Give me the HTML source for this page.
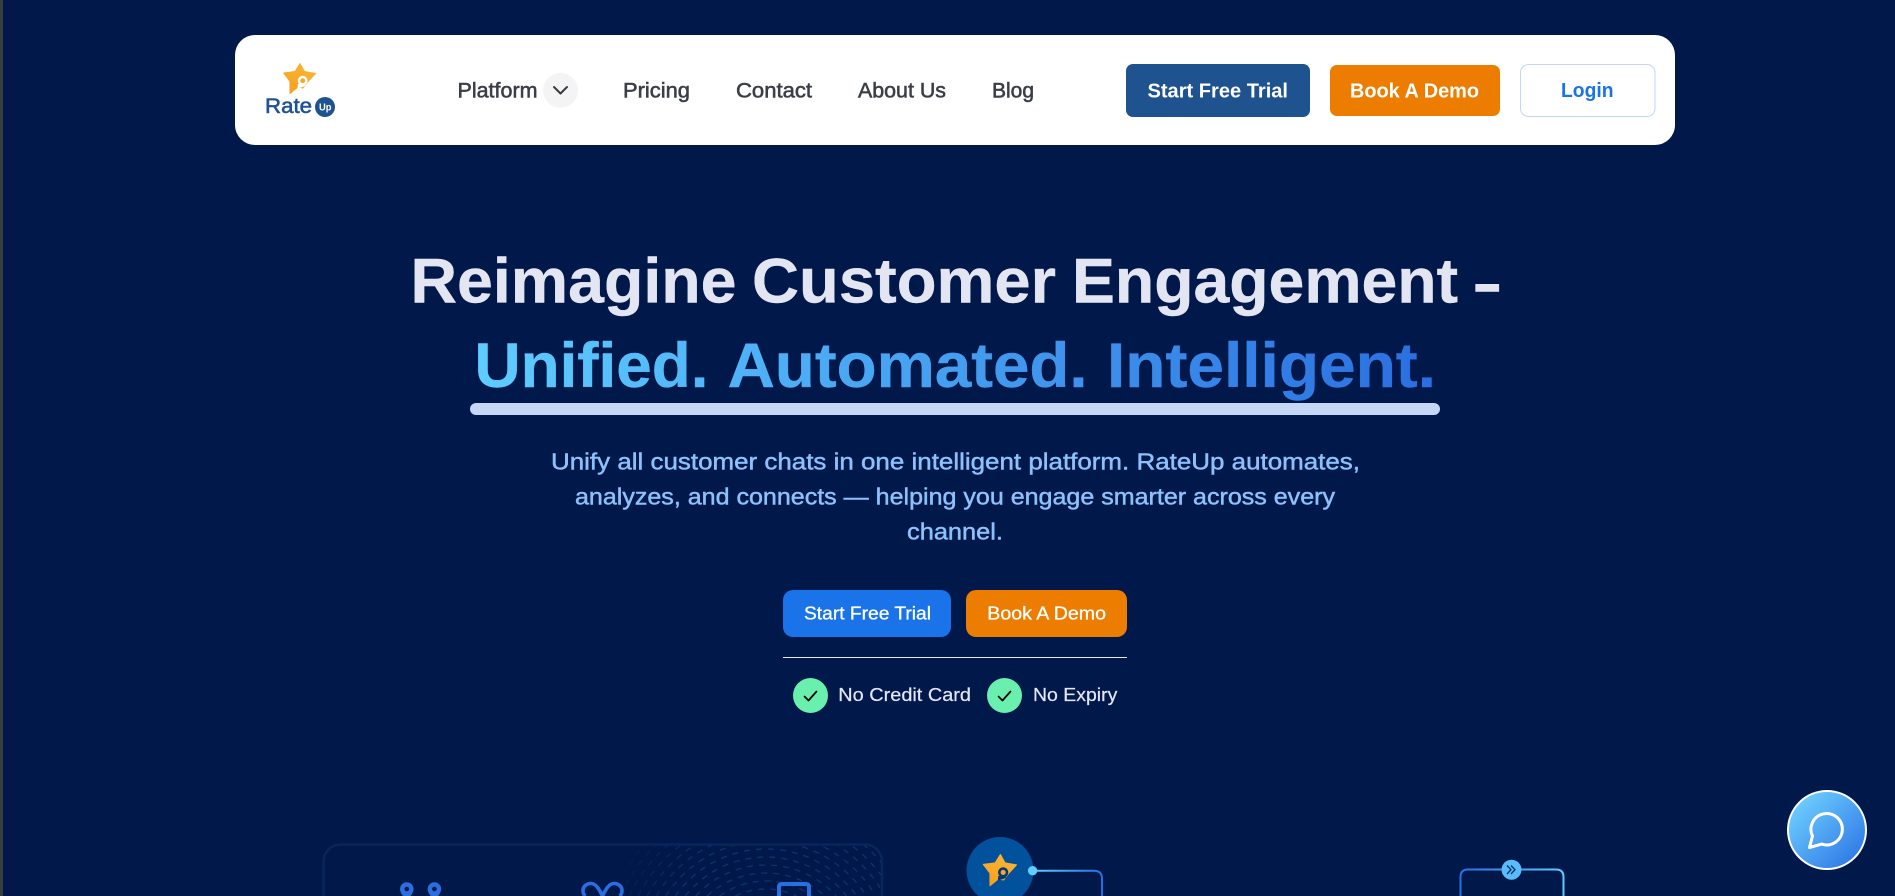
<!DOCTYPE html>
<html lang="en">
<head>
<meta charset="utf-8">
<title>RateUp</title>
<style>
html,body{margin:0;padding:0;width:1895px;height:896px;overflow:hidden;background:#00184a}
svg{position:absolute;left:0;top:0;display:block}
text{font-family:"Liberation Sans",Arial,sans-serif}
.nav{font-size:21px;font-weight:400;fill:#3a3e46;stroke:#3a3e46;stroke-width:.55}
.btn{font-size:20px;font-weight:700;fill:#fff}
.h{font-size:63px;font-weight:700}
.w{fill:#e3e6f2;stroke:#e3e6f2;stroke-width:.4}
.g{fill:url(#hg);stroke:url(#hg);stroke-width:.4}
.p{font-size:23px;fill:#8cc1fb;stroke:#8cc1fb;stroke-width:.45}
.cta{font-size:18px;fill:#fff;stroke:#fff;stroke-width:.3}
.chk{font-size:18px;fill:#e3e6f5;stroke:#e3e6f5;stroke-width:.2}
</style>
</head>
<body>
<svg width="1895" height="896" viewBox="0 0 1895 896" xmlns="http://www.w3.org/2000/svg">
<defs>
<linearGradient id="hg" gradientUnits="userSpaceOnUse" x1="470" y1="0" x2="1440" y2="0"><stop offset="0" stop-color="#5fcdff"/><stop offset="1" stop-color="#2a6ee0"/></linearGradient>
<linearGradient id="sg" x1="0.8" y1="0" x2="0.2" y2="1"><stop offset="0" stop-color="#fbb536"/><stop offset="1" stop-color="#f8a01e"/></linearGradient>
<linearGradient id="cg" x1="0.1" y1="0.1" x2="0.9" y2="0.9"><stop offset="0" stop-color="#6fd0ff"/><stop offset="1" stop-color="#2e78e6"/></linearGradient>
<linearGradient id="l1" gradientUnits="userSpaceOnUse" x1="1033" y1="0" x2="1102" y2="0"><stop offset="0" stop-color="#5fcdff"/><stop offset="1" stop-color="#2a6ee0"/></linearGradient>
<linearGradient id="l2" gradientUnits="userSpaceOnUse" x1="1460" y1="0" x2="1564" y2="0"><stop offset="0" stop-color="#2a6ee0"/><stop offset="1" stop-color="#5fcdff"/></linearGradient>
<radialGradient id="fade" gradientUnits="userSpaceOnUse" cx="790" cy="930" r="190"><stop offset="0" stop-color="#fff"/><stop offset=".6" stop-color="#fff"/><stop offset="1" stop-color="#000"/></radialGradient>
<mask id="fm"><rect x="323" y="843" width="560" height="53" fill="url(#fade)"/></mask>
<clipPath id="cc"><rect x="325" y="845" width="556" height="51" rx="14"/></clipPath>
<g id="star">
<path d="M300 63.5 L304.5 71.5 L315.5 73.5 L308.5 81 L303 88 L298 87 L290 93.5 L290 81.5 L283.6 73 L295 71.5 Z" fill="url(#sg)" stroke="url(#sg)" stroke-width="1" stroke-linejoin="round"/>
<path d="M298 84 L297.5 88.5 L303 87 L306.5 85 Z" fill="currentColor"/>
<circle cx="302.7" cy="80.7" r="3.7" fill="#f9a825" stroke="currentColor" stroke-width="2.5"/>
</g>
</defs>

<rect width="1895" height="896" fill="#00184a"/>
<rect x="0" y="0" width="3" height="896" fill="#383e40"/>

<!-- header -->
<rect x="235" y="35" width="1440" height="110" rx="20" fill="#fff"/>
<use href="#star" style="color:#fff"/>
<text x="265" y="113" font-size="21" fill="#1f5390" stroke="#1f5390" stroke-width=".6" textLength="47" lengthAdjust="spacingAndGlyphs">Rate</text>
<circle cx="325" cy="107" r="10" fill="#1f5390"/>
<text x="319" y="110.5" font-size="10.5" font-weight="700" fill="#fff" textLength="12.5" lengthAdjust="spacingAndGlyphs">Up</text>

<text class="nav" x="457.5" y="97.3" textLength="80" lengthAdjust="spacingAndGlyphs">Platform</text>
<circle cx="560.5" cy="90.3" r="17.5" fill="#f4f4f4"/>
<path d="M554 87 L560.5 93.5 L567 87" fill="none" stroke="#363a42" stroke-width="2" stroke-linecap="round" stroke-linejoin="round"/>
<text class="nav" x="623" y="97.3" textLength="67" lengthAdjust="spacingAndGlyphs">Pricing</text>
<text class="nav" x="736" y="97.3" textLength="76" lengthAdjust="spacingAndGlyphs">Contact</text>
<text class="nav" x="858" y="97.3" textLength="88" lengthAdjust="spacingAndGlyphs">About Us</text>
<text class="nav" x="992" y="97.3" textLength="42" lengthAdjust="spacingAndGlyphs">Blog</text>

<rect x="1126" y="64" width="184" height="53" rx="7" fill="#1e538f"/>
<text class="btn" x="1147.5" y="97.3" textLength="140.5" lengthAdjust="spacingAndGlyphs">Start Free Trial</text>
<rect x="1330" y="65" width="170" height="51" rx="7" fill="#ec7d00"/>
<text class="btn" x="1350" y="97.3" textLength="129" lengthAdjust="spacingAndGlyphs">Book A Demo</text>
<rect x="1520.5" y="64.5" width="134.5" height="52" rx="8" fill="#fff" stroke="#c0d5f8" stroke-width="1"/>
<text class="btn" x="1561" y="97" style="fill:#1a73e8" textLength="52.5" lengthAdjust="spacingAndGlyphs">Login</text>

<!-- hero -->
<text class="h w" x="410.5" y="302.7" textLength="326" lengthAdjust="spacingAndGlyphs">Reimagine</text>
<text class="h w" x="752" y="302.7" textLength="304" lengthAdjust="spacingAndGlyphs">Customer</text>
<text class="h w" x="1072" y="302.7" textLength="386" lengthAdjust="spacingAndGlyphs">Engagement</text>
<text class="h w" x="1474.5" y="305" style="stroke-width:1.4" textLength="25.5" lengthAdjust="spacingAndGlyphs">–</text>
<text class="h g" x="474.5" y="387" textLength="234" lengthAdjust="spacingAndGlyphs">Unified.</text>
<text class="h g" x="727.6" y="387" textLength="360" lengthAdjust="spacingAndGlyphs">Automated.</text>
<text class="h g" x="1107" y="387" textLength="329" lengthAdjust="spacingAndGlyphs">Intelligent.</text>
<rect x="470" y="403" width="970" height="12" rx="6" fill="#c5d7f5"/>

<text class="p" x="551" y="469.5" textLength="809" lengthAdjust="spacingAndGlyphs">Unify all customer chats in one intelligent platform. RateUp automates,</text>
<text class="p" x="575" y="504.5" textLength="760" lengthAdjust="spacingAndGlyphs">analyzes, and connects — helping you engage smarter across every</text>
<text class="p" x="907" y="539.5" textLength="96" lengthAdjust="spacingAndGlyphs">channel.</text>

<rect x="783" y="590" width="168" height="47" rx="10" fill="#1a73e8"/>
<text class="cta" x="804" y="619.5" textLength="127" lengthAdjust="spacingAndGlyphs">Start Free Trial</text>
<rect x="966" y="590" width="161" height="47" rx="10" fill="#ec7d00"/>
<text class="cta" x="987.3" y="619.5" textLength="118.7" lengthAdjust="spacingAndGlyphs">Book A Demo</text>
<rect x="783" y="657" width="344" height="1" fill="#e3e6f5"/>

<circle cx="810.5" cy="695.5" r="17.5" fill="#69f0ae"/>
<path d="M804.5 696.5 L808.5 700.5 L816.5 691.5" fill="none" stroke="#000" stroke-width="1.7" stroke-linecap="round" stroke-linejoin="round"/>
<text class="chk" x="838.3" y="701" textLength="132.7" lengthAdjust="spacingAndGlyphs">No Credit Card</text>
<circle cx="1004.5" cy="695.5" r="17.5" fill="#69f0ae"/>
<path d="M998.5 696.5 L1002.5 700.5 L1010.5 691.5" fill="none" stroke="#000" stroke-width="1.7" stroke-linecap="round" stroke-linejoin="round"/>
<text class="chk" x="1033" y="701" textLength="84.3" lengthAdjust="spacingAndGlyphs">No Expiry</text>

<!-- bottom left card -->
<g clip-path="url(#cc)"><g mask="url(#fm)" fill="none" stroke="#0b3470" stroke-width="1.3" stroke-dasharray="6 6">
<path d="M735.3 896A71 71 0 0 1 796.7 896"/>
<path d="M719.7 896A79 79 0 0 1 812.3 896"/>
<path d="M707.1 896A87 87 0 0 1 824.9 896"/>
<path d="M695.8 896A95 95 0 0 1 836.2 896"/>
<path d="M685.3 896A103 103 0 0 1 846.7 896"/>
<path d="M675.3 896A111 111 0 0 1 856.7 896"/>
<path d="M665.7 896A119 119 0 0 1 866.3 896"/>
<path d="M656.3 896A127 127 0 0 1 875.7 896"/>
<path d="M647.1 896A135 135 0 0 1 884.9 896"/>
<path d="M638.1 896A143 143 0 0 1 893.9 896"/>
<path d="M629.2 896A151 151 0 0 1 902.8 896"/>
<path d="M620.4 896A159 159 0 0 1 911.6 896"/>
<path d="M611.7 896A167 167 0 0 1 920.3 896"/>
</g></g>
<path d="M323.5 896 V861 A17 17 0 0 1 340.5 844.5 H865 A17 17 0 0 1 882 861 V896" fill="none" stroke="#08265c" stroke-width="2.5"/>

<path fill-rule="evenodd" d="M400 889 A6.8 6.8 0 0 1 413.6 889 C413.6 891.5 412 894 410.5 896 H403 C401.5 894 400 891.5 400 889 Z M404.5 889 A2.3 2.3 0 1 0 409.1 889 A2.3 2.3 0 1 0 404.5 889 Z" fill="#2a6ee0"/>
<path fill-rule="evenodd" d="M427.6 889 A6.8 6.8 0 0 1 441.2 889 C441.2 891.5 439.6 894 438.1 896 H430.7 C429.1 894 427.6 891.5 427.6 889 Z M432.1 889 A2.3 2.3 0 1 0 436.7 889 A2.3 2.3 0 1 0 432.1 889 Z" fill="#2a6ee0"/>
<g fill="none" stroke="#2a6ee0">
<path d="M602.5 896 C599 889 596 883.5 591 883.5 C586 883.5 583 887 583 890.5 C583 893 584 895 585.5 896" stroke-width="3.6"/>
<path d="M602.5 896 C606 889 609 883.5 614 883.5 C619 883.5 622 887 622 890.5 C622 893 621 895 619.5 896" stroke-width="3.6"/>
<path d="M779 896 V887 Q779 884 782 884 H806 Q809 884 809 887 V896" stroke-width="4"/>
</g>

<!-- bottom right flow -->
<path d="M1021.7 896 A33.5 33.5 0 1 0 978.3 896 Z" fill="#02519c"/>
<use href="#star" transform="translate(983 854) scale(1.04) translate(-283.3 -63)" style="color:#02397c"/>
<path d="M1035 870.7 H1094 Q1102 870.7 1102 878.7 V896" fill="none" stroke="url(#l1)" stroke-width="2"/>
<circle cx="1032.6" cy="870.7" r="4.7" fill="#5fcdff"/>
<path d="M1460.5 896 V877 Q1460.5 869.5 1468 869.5 H1556 Q1563.5 869.5 1563.5 877 V896" fill="none" stroke="url(#l2)" stroke-width="2"/>
<circle cx="1511.5" cy="869.7" r="10" fill="#57bcf9"/>
<path d="M1507 865.5 L1511 869.7 L1507 874 M1511 865.5 L1515 869.7 L1511 874" fill="none" stroke="#0b2f6b" stroke-width="1.3"/>

<!-- chat button -->
<circle cx="1827" cy="830" r="39" fill="url(#cg)" stroke="#fff" stroke-width="2"/>
<path d="M1812.5 836 L1809.5 847.5 L1821.7 844.1 A15.7 15.7 0 1 0 1812.5 836 Z" fill="none" stroke="#fff" stroke-width="3" stroke-linejoin="round"/>
</svg>
</body>
</html>
